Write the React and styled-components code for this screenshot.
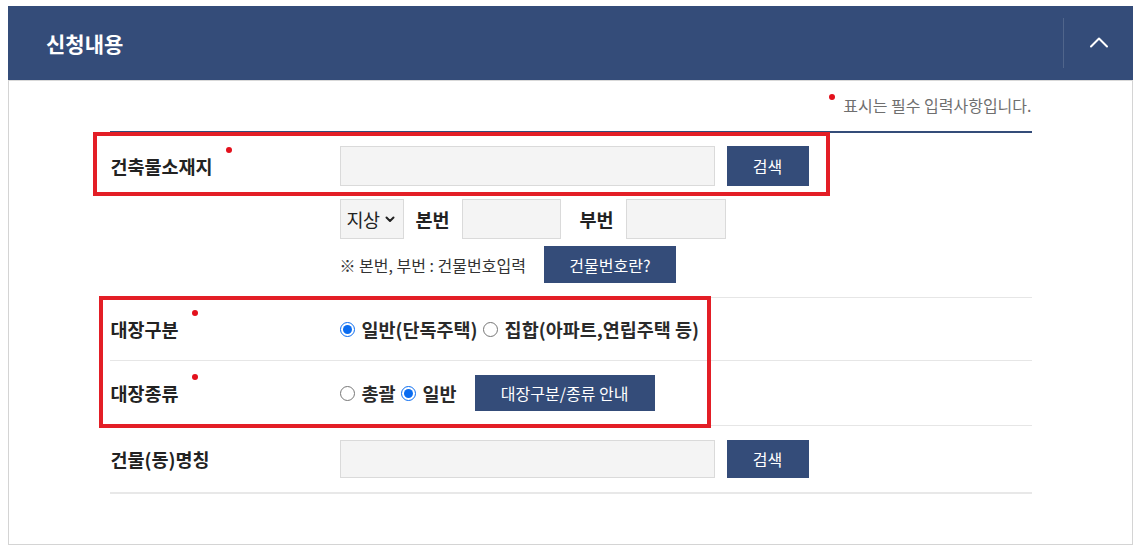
import React from "react";
import styled, { createGlobalStyle } from "styled-components";

const NAVY = "#344c79";
const FONT = "'Noto Sans CJK KR', 'Noto Sans', sans-serif";

const GlobalStyle = createGlobalStyle`
  html, body { margin: 0; padding: 0; background: #fff; }
  body { font-family: ${FONT}; color: #222; }
  * { box-sizing: border-box; }
`;

const Page = styled.div`
  padding: 6px 5px 5px 8px;
`;

const Panel = styled.section`
  width: 1125px;
`;

const Header = styled.header`
  height: 74px;
  background: ${NAVY};
  display: flex;
  align-items: center;
  justify-content: space-between;
  padding-left: 38px;
`;

const Title = styled.h2`
  margin: 0;
  font-size: 21px;
  font-weight: 700;
  color: #fff;
  line-height: 1;
`;

const Toggle = styled.button`
  width: 70px;
  height: 50px;
  border: 0;
  border-left: 1px solid rgba(255, 255, 255, 0.14);
  background: transparent;
  display: flex;
  align-items: center;
  justify-content: center;
  padding: 0 0 2px 0;
  cursor: pointer;
`;

const Body = styled.div`
  border: 1px solid #d4d4d4;
  border-top-color: #d9d9d9;
  padding: 0 0 50px;
`;

const Form = styled.div`
  width: 922px;
  margin: 0 auto;
`;

const RequiredNote = styled.p`
  margin: 0 0 16px;
  padding-top: 14px;
  display: flex;
  justify-content: flex-end;
  align-items: center;
  font-size: 16px;
  line-height: 20px;
  color: #6f6f6f;
`;

const Dot = styled.span`
  display: inline-block;
  width: 6px;
  height: 6px;
  border-radius: 50%;
  background: #e3101c;
  position: relative;
  top: ${(p) => p.$top || 0}px;
  margin-left: ${(p) => p.$ml || 0}px;
  margin-right: ${(p) => p.$mr || 0}px;
  vertical-align: middle;
`;

const Table = styled.div`
  border-top: 2px solid ${NAVY};
  border-bottom: 2px solid #e8e8e8;
`;

const Row = styled.div`
  position: relative;
  display: grid;
  grid-template-columns: 230px 1fr;
  padding: ${(p) => p.$pt}px 0 ${(p) => p.$pb}px;
  border-bottom: ${(p) => (p.$last ? "none" : "1px solid #e6e6e6")};
`;

const Group = styled.div`
  position: relative;
`;

const Highlight = styled.div`
  position: absolute;
  left: ${(p) => p.$l}px;
  top: ${(p) => p.$t}px;
  width: ${(p) => p.$w}px;
  height: ${(p) => p.$h}px;
  border: 4px solid #e31e26;
  pointer-events: none;
  z-index: 2;
`;

const Label = styled.div`
  font-size: 18.5px;
  font-weight: 700;
  color: #222;
  line-height: 40px;
  padding-left: 1px;
`;

const Field = styled.div`
  display: flex;
  flex-direction: column;
`;

const Line = styled.div`
  display: flex;
  align-items: center;
  min-height: ${(p) => p.$h || 40}px;
  margin-top: ${(p) => p.$mt || 0}px;
`;

const TextInput = styled.input`
  width: ${(p) => p.$w}px;
  height: ${(p) => p.$h || 40}px;
  background: #f4f4f4;
  border: 1px solid #dadada;
  margin: 0;
  padding: 0 10px;
  font-family: ${FONT};
  font-size: 15px;
  outline: none;
`;

const Button = styled.button`
  width: ${(p) => p.$w}px;
  height: ${(p) => p.$h}px;
  background: ${NAVY};
  color: #fff;
  border: 0;
  margin: 0 0 0 ${(p) => p.$ml || 0}px;
  padding: 0;
  font-family: ${FONT};
  font-size: 16px;
  font-weight: 400;
  cursor: pointer;
`;

const SelectBox = styled.div`
  width: 64px;
  height: 40px;
  background: #f4f4f4;
  border: 1px solid #dadada;
  display: flex;
  align-items: center;
  padding-left: 6px;
  gap: 5px;
  font-size: 18.5px;
  color: #222;
  letter-spacing: -0.5px;
`;

const InlineLabel = styled.span`
  font-size: 18.5px;
  font-weight: 700;
  color: #222;
  margin: 0 ${(p) => p.$mr || 12}px 0 ${(p) => p.$ml || 12}px;
`;

const Hint = styled.span`
  font-size: 16px;
  color: #333;
  margin-right: 18px;
`;

const RadioGroup = styled.div`
  display: flex;
  align-items: center;
  gap: 5px;
`;

const RadioOption = styled.label`
  display: inline-flex;
  align-items: center;
  gap: 7px;
  font-size: 18.5px;
  font-weight: 700;
  color: #2a2a2a;
  cursor: pointer;
`;

const Radio = styled.input.attrs({ type: "radio" })`
  width: 15px;
  height: 15px;
  margin: 0;
  accent-color: #0a6cf0;
`;

const ChevronUp = () => (
  <svg width="20" height="12" viewBox="0 0 20 12" fill="none">
    <polyline points="2,10.5 10,2.5 18,10.5" stroke="#fff" strokeWidth="2" strokeLinecap="round" strokeLinejoin="round" />
  </svg>
);

const ChevronDown = () => (
  <svg width="10" height="7" viewBox="0 0 10 7" fill="none">
    <polyline points="1.5,1.5 5,5 8.5,1.5" stroke="#222" strokeWidth="2" strokeLinecap="round" strokeLinejoin="round" />
  </svg>
);

export default function App() {
  return (
    <>
      <GlobalStyle />
      <Page>
        <Panel>
          <Header>
            <Title>신청내용</Title>
            <Toggle aria-label="접기">
              <ChevronUp />
            </Toggle>
          </Header>
          <Body>
            <Form>
              <RequiredNote>
                <Dot $top={-8} $mr={8} />
                표시는 필수 입력사항입니다.
              </RequiredNote>
              <Table>
                <Row $pt={13} $pb={14}>
                  <Highlight $l={-17} $t={-1} $w={737} $h={64} />
                  <Label>
                    건축물소재지
                    <Dot $top={-19} $ml={13} />
                  </Label>
                  <Field>
                    <Line>
                      <TextInput $w={375} />
                      <Button $w={82} $h={40} $ml={12}>검색</Button>
                    </Line>
                    <Line $mt={13}>
                      <SelectBox>
                        지상
                        <ChevronDown />
                      </SelectBox>
                      <InlineLabel>본번</InlineLabel>
                      <TextInput $w={99} />
                      <InlineLabel $ml={19}>부번</InlineLabel>
                      <TextInput $w={100} />
                    </Line>
                    <Line $mt={7} $h={37}>
                      <Hint>※ 본번, 부번 : 건물번호입력</Hint>
                      <Button $w={132} $h={37}>건물번호란?</Button>
                    </Line>
                  </Field>
                </Row>
                <Group>
                  <Highlight $l={-11} $t={-2} $w={612} $h={132} />
                  <Row $pt={11} $pb={11}>
                    <Label>
                      대장구분
                      <Dot $top={-19} $ml={13} />
                    </Label>
                    <Line>
                      <RadioGroup>
                        <RadioOption>
                          <Radio name="ledger-type" defaultChecked />
                          일반(단독주택)
                        </RadioOption>
                        <RadioOption>
                          <Radio name="ledger-type" />
                          집합(아파트,연립주택 등)
                        </RadioOption>
                      </RadioGroup>
                    </Line>
                  </Row>
                  <Row $pt={12} $pb={12}>
                    <Label>
                      대장종류
                      <Dot $top={-19} $ml={13} />
                    </Label>
                    <Line>
                      <RadioGroup>
                        <RadioOption>
                          <Radio name="ledger-kind" />
                          총괄
                        </RadioOption>
                        <RadioOption>
                          <Radio name="ledger-kind" defaultChecked />
                          일반
                        </RadioOption>
                      </RadioGroup>
                      <Button $w={180} $h={36} $ml={18}>대장구분/종류 안내</Button>
                    </Line>
                  </Row>
                </Group>
                <Row $pt={13} $pb={13} $last>
                  <Label>건물(동)명칭</Label>
                  <Line>
                    <TextInput $w={375} $h={38} />
                    <Button $w={82} $h={38} $ml={12}>검색</Button>
                  </Line>
                </Row>
              </Table>
            </Form>
          </Body>
        </Panel>
      </Page>
    </>
  );
}
